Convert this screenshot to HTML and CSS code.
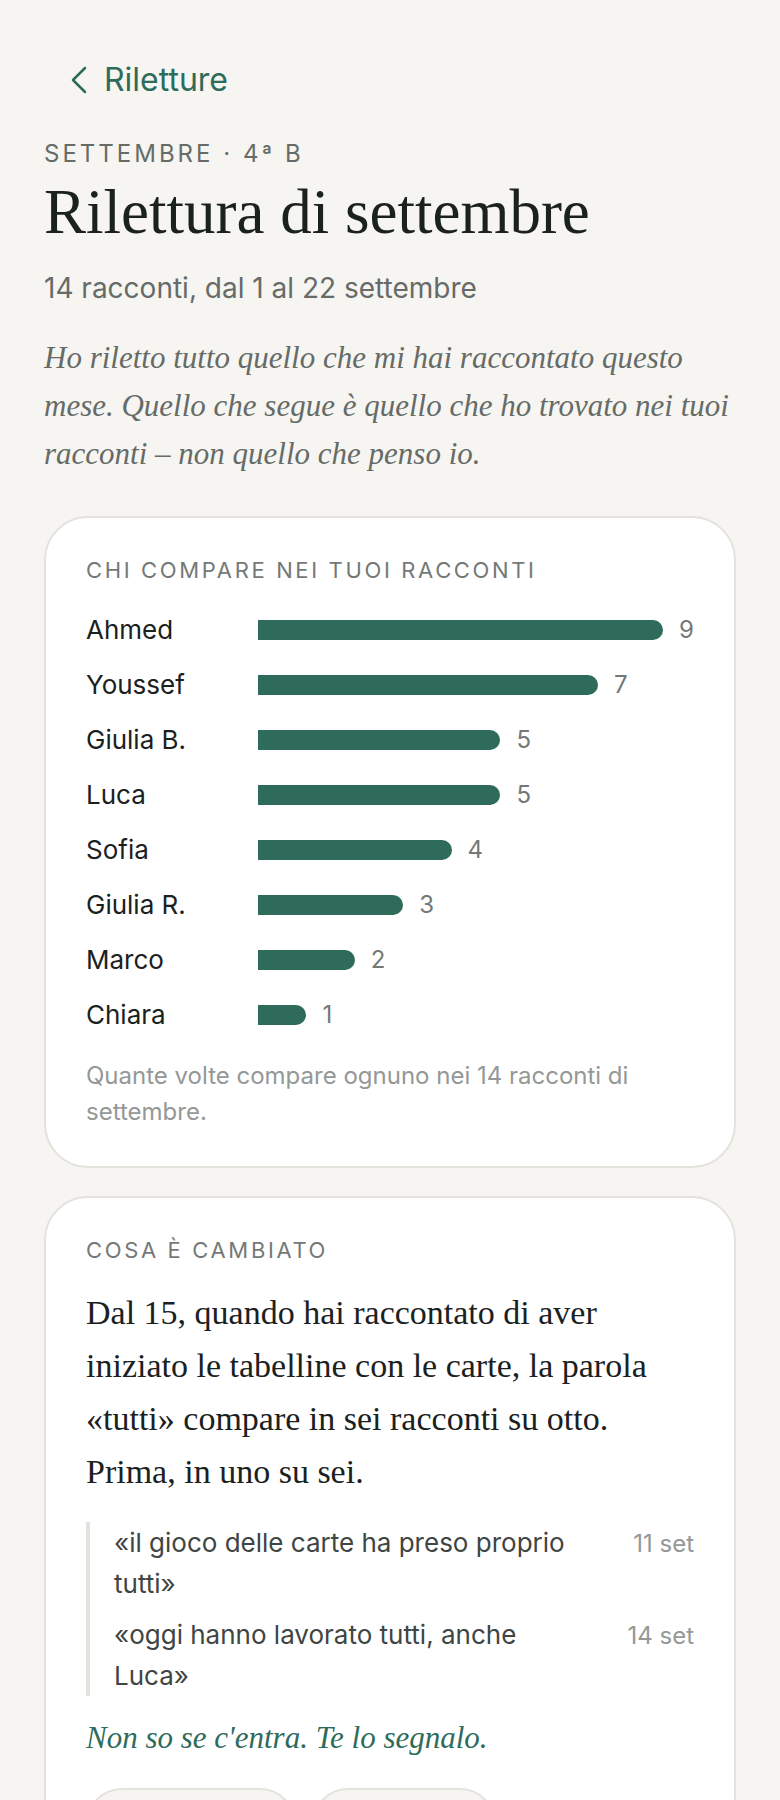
FILE: index.html
```
<!DOCTYPE html>
<html lang="it">
<head>
    <meta charset="UTF-8">
    <meta name="viewport" content="width=device-width, initial-scale=1.0">
    <title>Rilettura di settembre</title>
    <link rel="stylesheet" href="styles.css">
</head>

<body>
    <main class="page">
        <nav class="back">
            <a href="#riletture">
                <svg class="chevron" viewBox="0 0 18 28" aria-hidden="true">
                    <path d="M15 2 L3 14 L15 26"></path>
                </svg>
                <span>Riletture</span>
            </a>
        </nav>

        <header class="intro">
            <p class="eyebrow">Settembre · 4ª B</p>
            <h1>Rilettura di settembre</h1>
            <p class="period">14 racconti, dal 1 al 22 settembre</p>
            <p class="lead">Ho riletto tutto quello che mi hai raccontato questo mese. Quello che segue è quello che ho trovato nei tuoi racconti – non quello che penso io.</p>
        </header>

        <section class="card">
            <h2>Chi compare nei tuoi racconti</h2>
            <ul class="chart">
                <li><span class="name">Ahmed</span><span class="track"><span class="bar" style="width: 100%"></span><span class="count">9</span></span></li>
                <li><span class="name">Youssef</span><span class="track"><span class="bar" style="width: 78%"></span><span class="count">7</span></span></li>
                <li><span class="name">Giulia B.</span><span class="track"><span class="bar" style="width: 55.6%"></span><span class="count">5</span></span></li>
                <li><span class="name">Luca</span><span class="track"><span class="bar" style="width: 55.6%"></span><span class="count">5</span></span></li>
                <li><span class="name">Sofia</span><span class="track"><span class="bar" style="width: 44.4%"></span><span class="count">4</span></span></li>
                <li><span class="name">Giulia R.</span><span class="track"><span class="bar" style="width: 33.3%"></span><span class="count">3</span></span></li>
                <li><span class="name">Marco</span><span class="track"><span class="bar" style="width: 22.2%"></span><span class="count">2</span></span></li>
                <li><span class="name">Chiara</span><span class="track"><span class="bar" style="width: 11.1%"></span><span class="count">1</span></span></li>
            </ul>
            <p class="note">Quante volte compare ognuno nei 14 racconti di settembre.</p>
        </section>

        <section class="card">
            <h2>Cosa è cambiato</h2>
            <p class="finding">Dal 15, quando hai raccontato di aver iniziato le tabelline con le carte, la parola «tutti» compare in sei racconti su otto. Prima, in uno su sei.</p>
            <div class="quotes">
                <div class="quote">
                    <q>il gioco delle carte ha preso proprio tutti</q>
                    <time datetime="09-11">11 set</time>
                </div>
                <div class="quote">
                    <q>oggi hanno lavorato tutti, anche Luca</q>
                    <time datetime="09-14">14 set</time>
                </div>
            </div>
            <p class="remark">Non so se c'entra. Te lo segnalo.</p>
            <div class="actions">
                <button type="button" class="wide" aria-label="Conferma"></button>
                <button type="button" aria-label="Ignora"></button>
            </div>
        </section>
    </main>
</body>
</html>
```
FILE: styles.css
```
* {
    box-sizing: border-box;
}

body {
    margin: 0;
    background: #f6f5f1;
    color: #1a211e;
    font-family: Inter, "Liberation Sans", sans-serif;
}

h1, h2, p, ul {
    margin: 0;
    padding: 0;
    font-weight: 400;
}

.page {
    padding: 56px 44px;
}

.back a {
    display: inline-flex;
    align-items: center;
    gap: 16px;
    padding: 0 26px;
    color: #2e6b5a;
    font-size: 32px;
    line-height: 48px;
    text-decoration: none;
}

.chevron {
    width: 18px;
    height: 28px;
    fill: none;
    stroke: currentColor;
    stroke-width: 2.5;
    stroke-linecap: round;
    stroke-linejoin: round;
}

.intro {
    margin-top: 32px;
    margin-bottom: 38px;
    color: #666b68;
}

.eyebrow {
    font-size: 24px;
    line-height: 36px;
    letter-spacing: 3px;
    text-transform: uppercase;
}

h1 {
    margin-top: 6px;
    color: #1a211e;
    font-family: "Liberation Serif", serif;
    font-size: 63px;
    line-height: 68px;
}

.period {
    margin-top: 22px;
    font-size: 28px;
    line-height: 40px;
}

.lead {
    margin-top: 26px;
    font-family: "Liberation Serif", serif;
    font-size: 31px;
    font-style: italic;
    line-height: 48px;
}

.card {
    margin-bottom: 28px;
    padding: 38px 40px 36px;
    background: #fff;
    border: 2px solid #e4e2dc;
    border-radius: 44px;
}

h2 {
    color: #747977;
    font-size: 22px;
    line-height: 28px;
    letter-spacing: 0.12em;
    text-transform: uppercase;
}

.chart {
    margin-top: 18px;
    list-style: none;
}

.chart li {
    display: grid;
    grid-template-columns: 156px 1fr;
    gap: 16px;
    align-items: center;
    height: 55px;
}

.name {
    font-size: 26px;
}

.track {
    display: flex;
    align-items: center;
    gap: 16px;
}

.bar {
    height: 20px;
    background: #2e6b5a;
    border-radius: 0 10px 10px 0;
}

.count {
    color: #747977;
    font-size: 24px;
}

.note {
    margin-top: 16px;
    color: #949896;
    font-size: 24px;
    line-height: 36px;
}

.finding {
    margin-top: 22px;
    font-family: "Liberation Serif", serif;
    font-size: 34px;
    line-height: 53px;
}

.quotes {
    display: grid;
    gap: 10px;
    margin-top: 24px;
    padding-left: 24px;
    border-left: 4px solid #e4e2dc;
}

.quote {
    display: flex;
    align-items: baseline;
    justify-content: space-between;
    gap: 32px;
    color: #3f4543;
    font-size: 26px;
    line-height: 41px;
}

.quote q {
    quotes: "«" "»";
}

.quote time {
    flex: none;
    color: #949896;
    font-size: 24px;
}

.remark {
    margin-top: 18px;
    color: #2e6b5a;
    font-family: "Liberation Serif", serif;
    font-size: 31px;
    font-style: italic;
    line-height: 48px;
}

.actions {
    display: flex;
    flex-wrap: wrap;
    gap: 16px;
    margin-top: 26px;
}

.actions button {
    min-width: 184px;
    min-height: 72px;
    background: #f6f5f1;
    border: 2px solid #e4e2dc;
    border-radius: 36px;
}

.actions .wide {
    min-width: 210px;
}
```
